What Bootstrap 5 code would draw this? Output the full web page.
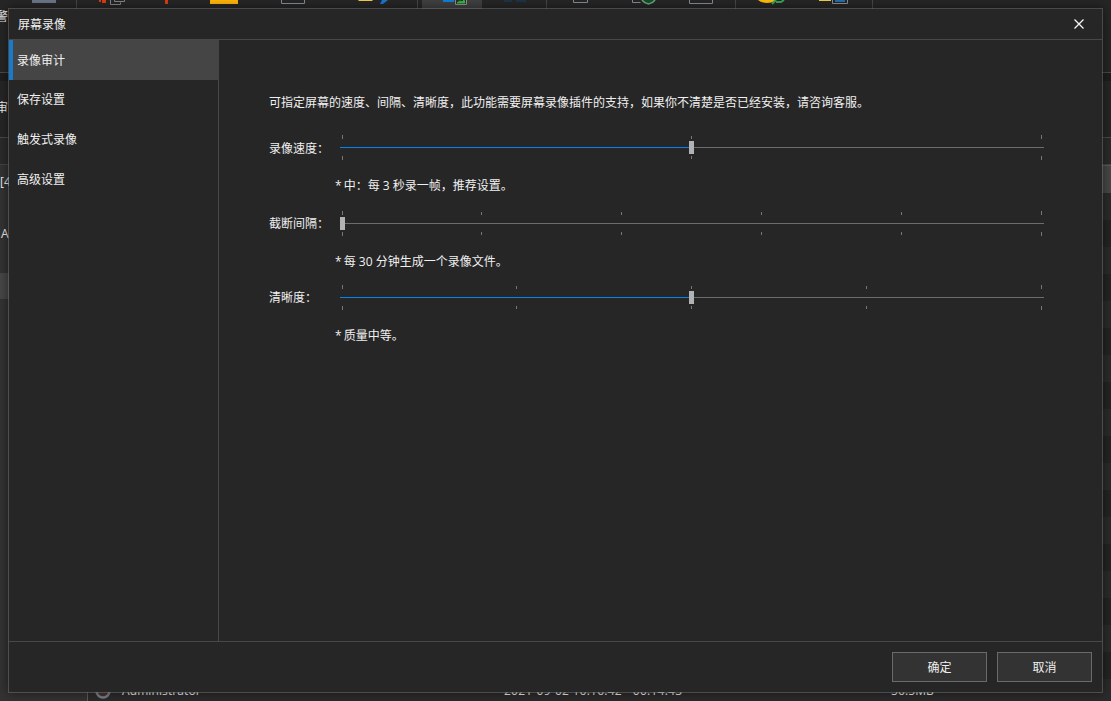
<!DOCTYPE html>
<html lang="zh-CN" data-bs-theme="dark">
<head>
<meta charset="utf-8">
<meta name="viewport" content="width=device-width, initial-scale=1">
<title>屏幕录像</title>
<link href="https://cdn.jsdelivr.net/npm/bootstrap@5.3.0/dist/css/bootstrap.min.css" rel="stylesheet">
<style>
  body { width: 1111px; height: 701px; background: #262626; color: #f0f0f0; font: 12px/18px "Open Sans", "Noto Sans CJK SC", sans-serif; }
  svg { display: block; flex: none; }
  /* main window behind the dialog */
  .app { height: 701px; }
  .tools { height: 73px; border-bottom: 1px solid #4a4a4a; }
  .tool-group { height: 34px; border-right: 1px solid #484848; }
  .cut { margin-left: -4px; }
  .band-gap { height: 8px; background: #1e1e1e; }
  .band-a { height: 57px; padding-top: 18px; border-bottom: 1px solid #4a4a4a; background: #262626; }
  .band-b { height: 27px; border-bottom: 1px solid #454545; background: #2b2b2b; }
  .tree { width: 88px; background: #333; border-right: 1px solid #5c5c5c; }
  .tree-name { padding-left: 1px; }
  .tree-sel { height: 26px; background: #474747; }
  .grid-head { height: 28px; background: #484848; border-top: 1px solid #5c5c5c; }
  .grid-body { padding-bottom: 1px; background: repeating-linear-gradient(#2b2b2b 0 27px, #242424 27px 54px); }
  .grid-line { height: 18px; letter-spacing: .1px; }
  .who { width: 382px; }
  .when { width: 387px; letter-spacing: .25px; }
  /* dialog */
  .dlg { left: 8px; top: 8px; width: 1095px; height: 685px; background: #262626; background-clip: padding-box; border: 1px solid rgba(130,130,130,.45); box-shadow: 0 0 10px rgba(0,0,0,.5); }
  .dlg-title { height: 31px; padding: 0 18px 0 9px; border-bottom: 1px solid #484848; }
  .dlg-title span { padding-top: 1px; }
  .dlg-side { width: 210px; border-right: 1px solid #484848; }
  .side-item { height: 40px; padding: 0 8px; border: 0; color: #f0f0f0; background: transparent; text-decoration: none; }
  .side-item.active { width: 210px; padding-top: 1px; padding-left: 4px; background: #454545; border-left: 4px solid #1979ca; }
  .dlg-main { padding: 54px 58px 0 50px; }
  .intro { height: 41px; }
  .set-row { height: 25px; }
  .set-label { width: 71px; }
  .slide { width: 704px; height: 25px; }
  .ticks { height: 4px; padding: 0 2px; }
  .ticks i { width: 1px; height: 3px; margin: 0 .5px 0 -.5px; background: #777; }
  .ticks i:first-child, .ticks i:last-child { height: 4px; margin: 0; }
  .rail { flex: none; height: 1px; background: #6c6c6c; }
  .rail-fill { height: 1px; background: #1a7ed2; box-shadow: 0 -1px #152b40; }
  .thumb { width: 5px; height: 13px; top: 6px; background: #b2b2b2; }
  .note { height: 18px; margin: 17px 0 16px 66px; }
  .note-short { margin-bottom: 14px; }
  .star { letter-spacing: -1px; }
  .dlg-foot { height: 51px; padding: 0 10px; border-top: 1px solid #484848; }
  .dlg-btn { width: 95px; height: 30px; padding: 1px 0 0; font-size: 12px; line-height: 28px; color: #f0f0f0; background: #333; border: 1px solid #6a6a6a; border-radius: 0; }
</style>
</head>
<body class="overflow-hidden position-relative">

<div class="app d-flex flex-column">
  <div class="tools d-flex flex-wrap align-content-start">
    <div class="tool-group"><svg width="76" height="8"><path d="M32 0h24v3H32z" fill="#6b7688"/></svg><div class="cut">警</div></div>
    <div class="tool-group"><svg width="340" height="8">
      <path d="M25 0h4v3h-4zM22 0h2v2h-2zM88 0h3v4h-3z" fill="#dd3c12"/>
      <path d="M33.500 0v4.500h10v-2M37.500 0v1.500h10V0" fill="none" stroke="#868686"/>
      <path d="M133 0h28v4h-28z" fill="#ffb60a"/>
      <path d="M204.500-1v4.500h23V-1" fill="none" stroke="#858c98"/>
      <path d="M280-1h17l-2 2h-13z" fill="#f3cc45"/>
      <path d="M303 4l2-4h6l-5 4z" fill="#1a76cf"/></svg></div>
    <div class="tool-group"><svg width="128" height="34">
      <path d="M4 0h60v34H4z" fill="#414141"/>
      <path d="M25 0h11v2H25z" fill="#1180dc"/>
      <path d="M37.500-1v5.500h11V-1" fill="#263526" stroke="#8b958b"/>
      <path d="M39 3l3-2 2 1 2-2 1 3z" fill="#3cb54a" stroke="#3cb54a"/>
      <path d="M86 0h8v2h-8zM98 0h10v2H98z" fill="#1d3347"/></svg></div>
    <div class="tool-group"><svg width="188" height="8">
      <path d="M26.500-1v3.500h14V-1M142.500-1v4.500h23V-1M85.500-1v3.500h8" fill="none" stroke="#858c98"/>
      <path d="M95 0q2 3 6.500 4 4.500-1 6.500-4" fill="#174e2b" stroke="#68a879" stroke-width="1.500"/></svg></div>
    <div class="tool-group"><svg width="136" height="8">
      <path d="M22 0h18q-3 3-9 3t-9-3z" fill="#ffbd0a"/>
      <path d="M36 4l4-4M40 2h5l3-2" fill="none" stroke="#38a357" stroke-width="2"/>
      <path d="M83 0h12v1H83z" fill="#f3cc45"/>
      <path d="M96.500-1v4.500h15V-1" fill="#262626" stroke="#8591a0"/>
      <path d="M99 0h10v2H99z" fill="#286ea6"/></svg></div>
  </div>
  <div class="band-gap"></div>
  <div class="band-a"><div class="cut">审</div></div>
  <div class="band-b"></div>
  <div class="d-flex flex-grow-1">
    <div class="tree d-flex flex-column">
      <div style="height:8px"></div>
      <div>[4</div>
      <div style="height:34px"></div>
      <div class="tree-name">A</div>
      <div style="height:30px"></div>
      <div class="tree-sel"></div>
    </div>
    <div class="flex-grow-1 d-flex flex-column">
      <div class="grid-head"></div>
      <div class="grid-body flex-grow-1 d-flex flex-column justify-content-end">
        <div class="grid-line d-flex align-items-center">
          <svg width="34" height="18" viewBox="0 0 34 18"><circle cx="15" cy="9" r="6.500" fill="#4b3230" stroke="#78808b" stroke-width="2.500"/></svg>
          <span class="who">Administrator</span><span class="when">2021-09-02 16:16:42 - 00:14:43</span><span>56.5MB</span>
        </div>
      </div>
    </div>
  </div>
</div>

<div class="dlg position-absolute d-flex flex-column">
  <div class="dlg-title d-flex align-items-center justify-content-between">
    <span>屏幕录像</span>
    <svg width="10" height="10" viewBox="0 0 10 10"><path d="M.5.5l9 9M9.500.5l-9 9" stroke="#f5f5f5" stroke-width="1.300"/></svg>
  </div>
  <div class="d-flex flex-grow-1">
    <nav class="dlg-side d-flex flex-column">
      <a class="side-item active d-flex align-items-center">录像审计</a>
      <a class="side-item d-flex align-items-center">保存设置</a>
      <a class="side-item d-flex align-items-center">触发式录像</a>
      <a class="side-item d-flex align-items-center">高级设置</a>
    </nav>
    <main class="dlg-main flex-grow-1">
      <p class="intro mb-0 text-nowrap">可指定屏幕的速度、间隔、清晰度，此功能需要屏幕录像插件的支持，如果你不清楚是否已经安装，请咨询客服。</p>

      <div class="set-row d-flex align-items-center">
        <span class="set-label" style="padding-top:2px">录像速度：</span>
        <div class="slide position-relative d-flex flex-column justify-content-between">
          <div class="ticks d-flex justify-content-between align-items-end"><i></i><i></i><i></i></div>
          <div class="rail"><div class="rail-fill" style="width:50%"></div></div>
          <div class="ticks d-flex justify-content-between"><i></i><i></i><i></i></div>
          <span class="thumb position-absolute" style="left:349px"></span>
        </div>
      </div>
      <div class="note"><span class="star">*</span> 中：每 3 秒录一帧，推荐设置。</div>

      <div class="set-row d-flex align-items-center">
        <span class="set-label">截断间隔：</span>
        <div class="slide position-relative d-flex flex-column justify-content-between">
          <div class="ticks d-flex justify-content-between align-items-end"><i></i><i></i><i></i><i></i><i></i><i></i></div>
          <div class="rail"></div>
          <div class="ticks d-flex justify-content-between"><i></i><i></i><i></i><i></i><i></i><i></i></div>
          <span class="thumb position-absolute" style="left:0"></span>
        </div>
      </div>
      <div class="note note-short"><span class="star">*</span> 每 30 分钟生成一个录像文件。</div>

      <div class="set-row d-flex align-items-center">
        <span class="set-label">清晰度：</span>
        <div class="slide position-relative d-flex flex-column justify-content-between">
          <div class="ticks d-flex justify-content-between align-items-end"><i></i><i></i><i></i><i></i><i></i></div>
          <div class="rail"><div class="rail-fill" style="width:50%"></div></div>
          <div class="ticks d-flex justify-content-between"><i></i><i></i><i></i><i></i><i></i></div>
          <span class="thumb position-absolute" style="left:349px"></span>
        </div>
      </div>
      <div class="note"><span class="star">*</span> 质量中等。</div>
    </main>
  </div>
  <div class="dlg-foot d-flex align-items-center justify-content-end gap-2">
    <button class="btn dlg-btn">确定</button>
    <button class="btn dlg-btn" style="margin-left:2px">取消</button>
  </div>
</div>

<script src="https://cdn.jsdelivr.net/npm/bootstrap@5.3.0/dist/js/bootstrap.bundle.min.js"></script>
</body>
</html>
